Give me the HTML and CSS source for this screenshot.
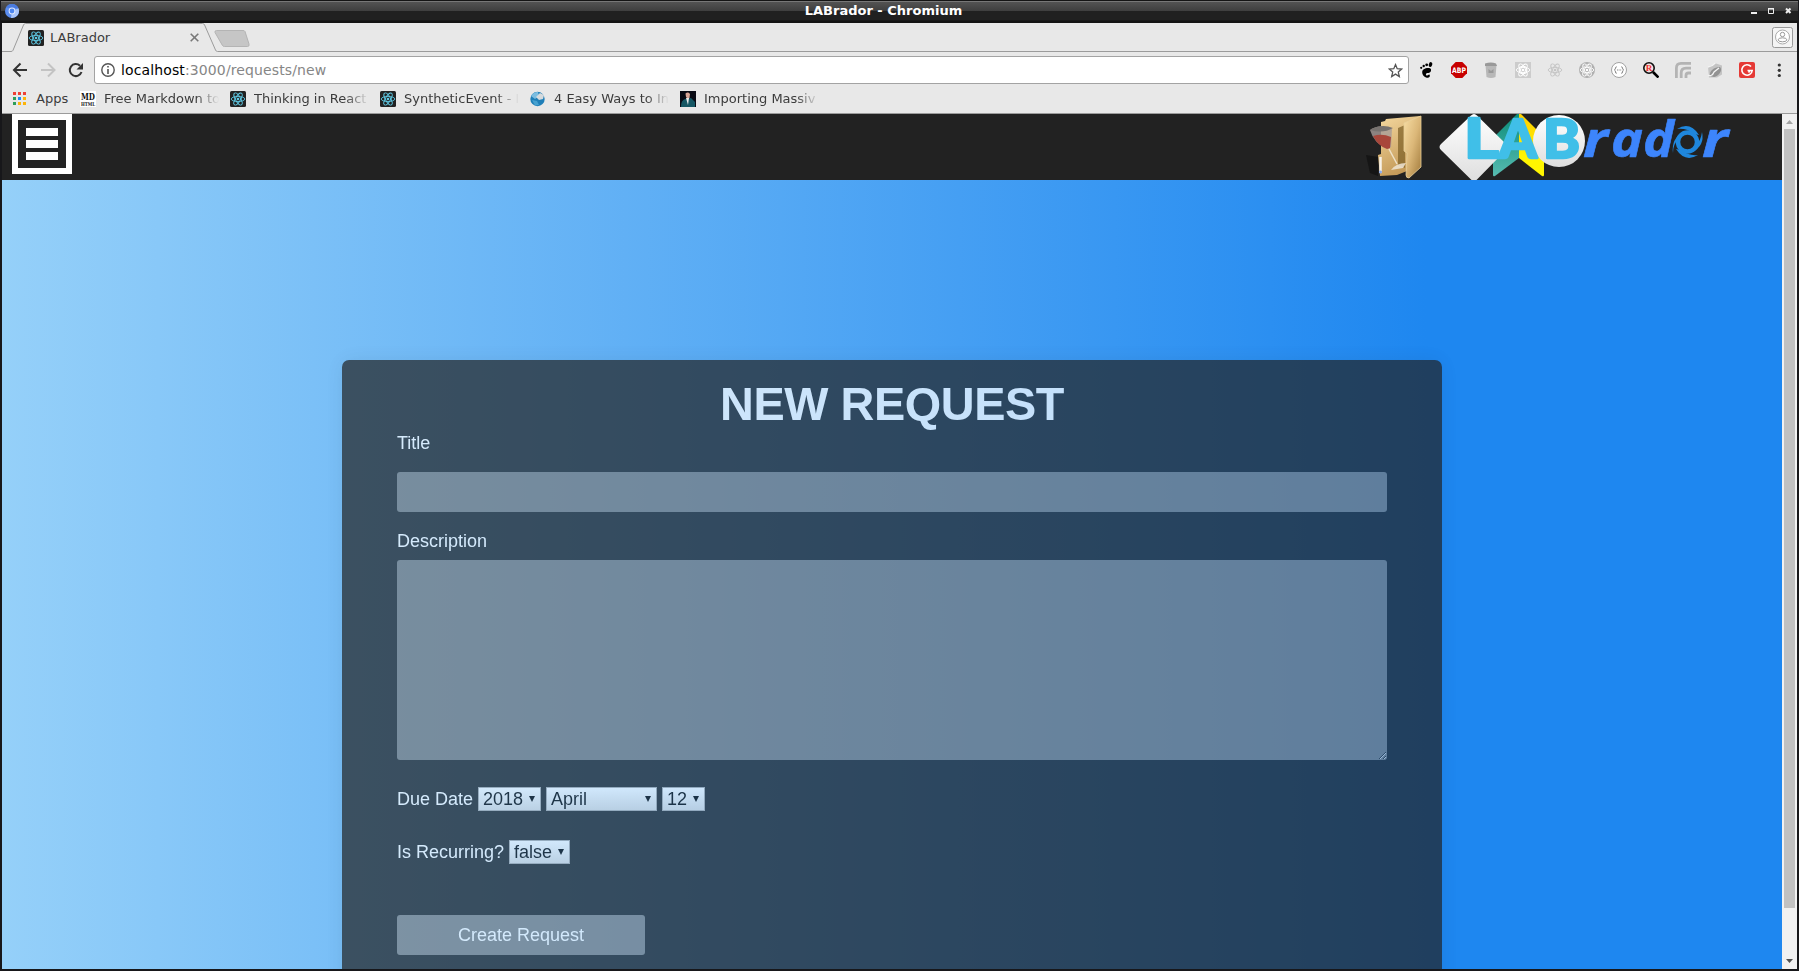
FILE: index.html
```html
<!DOCTYPE html>
<html lang="en">
<head>
<meta charset="utf-8">
<title>LABrador</title>
<link rel="stylesheet" href="styles.css">
</head>
<body>
<svg width="0" height="0" class="defs">
  <defs>
    <symbol id="atom" viewBox="0 0 16 16">
      <g fill="none" stroke="currentColor" stroke-width=".9">
        <ellipse cx="8" cy="8" rx="6.8" ry="2.6"/>
        <ellipse cx="8" cy="8" rx="6.8" ry="2.6" transform="rotate(60 8 8)"/>
        <ellipse cx="8" cy="8" rx="6.8" ry="2.6" transform="rotate(120 8 8)"/>
      </g>
      <circle cx="8" cy="8" r="1.3" fill="currentColor"/>
    </symbol>
    <symbol id="react" viewBox="0 0 16 16">
      <rect width="16" height="16" rx="1.5" fill="#222"/>
      <use href="#atom" width="16" height="16"/>
    </symbol>
  </defs>
</svg>
<div class="window">
  <div class="titlebar">
    <svg class="chromium" width="14" height="14" viewBox="0 0 14 14"><circle cx="7" cy="7" r="7" fill="#5b8def"/><path d="M7 7 13.4 4.2A7 7 0 0 1 6 13.9Z" fill="#a9c5fb"/><path d="M1 3.5A7 7 0 0 1 13.4 4.2H7Z" fill="#4a7be0"/><circle cx="7" cy="7" r="3.4" fill="#dfe9fd"/><circle cx="7" cy="7" r="2.4" fill="#4d86f0"/></svg>
    <span class="win-title">LABrador - Chromium</span>
    <svg class="win-buttons" width="42" height="8" viewBox="0 0 42 8"><path d="M0 5h6v2H0z" fill="#eee"/><path d="M17 1h6v1.6h-6z" fill="#eee"/><path d="M17.500 1.500h5v5h-5z" fill="none" stroke="#eee"/><path d="M35 1.500l4.500 4.500M39.500 1.500l-4.500 4.500" stroke="#eee" stroke-width="2"/></svg>
  </div>
  <div class="tabs">
    <svg class="tab-shape" width="1795" height="29" viewBox="0 0 1795 29">
      <path d="M0 28.500H9q1.500 0 2-1.200L21.500 2q.7-1.500 2-1.500H200.500q1.500 0 2.100 1.500L213.500 27q.6 1.500 2 1.500H1795" fill="none" stroke="#9b9b9b"/>
      <path d="M214.500 7.500h26.500q1.500 0 2 1l4 12.500q.6 2.500-1.500 2.500h-23q-1.600 0-2.200-1.300L213 9.500q-.5-2 1.500-2z" fill="#c6c6c6" stroke="#b4b4b4"/>
    </svg>
    <div class="tab">
      <svg class="react" width="16" height="16"><use href="#react"/></svg>
      <span>LABrador</span>
      <svg width="9" height="9" viewBox="0 0 9 9"><path d="M.7.7l7.600 7.600M8.300.7.7 8.300" stroke="#777" stroke-width="1.600"/></svg>
    </div>
    <svg class="profile" width="21" height="21" viewBox="0 0 21 21"><rect x=".5" y=".5" width="20" height="20" rx="2" fill="#f4f4f4" stroke="#999"/><circle cx="10.500" cy="10" r="7" fill="#fff" stroke="#aaa"/><circle cx="10.500" cy="7.500" r="2.200" fill="none" stroke="#999"/><ellipse cx="10.500" cy="12.800" rx="4.300" ry="2" fill="none" stroke="#999"/></svg>
  </div>
  <div class="toolbar">
    <svg class="nav" width="76" height="16" viewBox="0 0 76 16" fill="none" stroke-width="2">
      <path d="M15 8H2.500M8.500 1.500 2 8 8.500 14.500" stroke="#333"/>
      <path d="M29 8H41.500M36 1.500 42.500 8l-6.500 6.500" stroke="#c3c3c3"/>
      <path d="M68 3.800A6 6 0 1 0 69.500 10" stroke="#333"/><path d="M71 1v6.500h-6.500z" fill="#333"/>
    </svg>
    <div class="omnibox">
      <svg width="14" height="14" viewBox="0 0 14 14"><circle cx="7" cy="7" r="6.200" fill="none" stroke="#555" stroke-width="1.400"/><path d="M6.200 3h1.600v1.600H6.200zM6.200 6h1.600v5H6.200z" fill="#555"/></svg>
      <span class="url"><b>localhost</b>:3000/requests/new</span>
      <svg class="star" width="15" height="15" viewBox="0 0 15 15"><path d="M7.500 1.600 9.200 5.700l4.500.4-3.400 3 1 4.400-3.800-2.400-3.800 2.400 1-4.400-3.400-3 4.500-.4z" fill="none" stroke="#555" stroke-width="1.300"/></svg>
    </div>
    <div class="extensions">
      <svg width="16" height="16" viewBox="0 0 16 16"><ellipse cx="11.500" cy="2.600" rx="1.700" ry="2.500" transform="rotate(15 11.500 2.600)"/><circle cx="7.700" cy="2.800" r="1.400"/><circle cx="4.700" cy="4" r="1.200"/><circle cx="2.200" cy="5.800" r="1.100"/><path d="M11 6.200C7 5.500 3 7 3.200 10.500S7 16 9 15.800c2-.2 2.200-2 1.500-3.200l-1.600.3c-.5 1-2 .6-2-.5 0-1.400 1.600-1.600 2.600-1.500 2.500 0 3.500-3.900 1.500-4.700z"/></svg>
      <svg width="16" height="16" viewBox="0 0 16 16"><path d="M4.700 0h6.600L16 4.700v6.600L11.300 16H4.700L0 11.300V4.700z" fill="#c70000"/><text x="8" y="11" class="abp" textLength="14" lengthAdjust="spacingAndGlyphs">ABP</text></svg>
      <svg width="16" height="16" viewBox="0 0 16 16"><path d="M2.500 3h11l-1 12q-4.500 2-9 0z" fill="#b8b8b8"/><path d="M2 1.500q6-2 11 0l1 2.500H2z" fill="#999"/><path d="M5.500 7l2.500 2 2.500-2v4h-5z" fill="#999"/></svg>
      <svg class="white" width="16" height="16"><rect width="16" height="16" fill="#ccc"/><use href="#atom"/><circle cx="8" cy="8" r="4" fill="none" stroke="#fff"/></svg>
      <svg class="pale" width="16" height="16"><use href="#atom"/></svg>
      <svg class="white" width="16" height="16"><circle cx="8" cy="8" r="8" fill="#b0b0b0"/><use href="#atom"/><circle cx="8" cy="8" r="4.500" fill="none" stroke="#e5e5e5"/></svg>
      <svg width="16" height="16" viewBox="0 0 16 16"><circle cx="8" cy="8" r="7.500" fill="#fff" stroke="#a2a2a2"/><path d="M5.800 4.800q-1.300 0-1.300 1.200T3.300 8q1.200.4 1.200 2t1.300 1.200M10.200 4.800q1.300 0 1.300 1.200t1.200 2q-1.200.4-1.200 2t-1.300 1.200" fill="none" stroke="#888"/><path d="M6 7.600h1v1H6zm1.600 0h1v1h-1zm1.600 0h1v1h-1z" fill="#888"/></svg>
      <svg width="16" height="16" viewBox="0 0 16 16"><circle cx="6" cy="6" r="5.200" fill="#f3e3e3" stroke="#111" stroke-width="1.600"/><path d="M10 10l5.500 5.500" stroke="#000" stroke-width="2.600"/><text x="6" y="9.200" class="mag">R</text></svg>
      <svg width="16" height="16" viewBox="0 0 16 16" fill="none" stroke="#b4b4b4" stroke-width="2.800"><path d="M1.400 16V6Q1.400 1.400 6 1.400H16M6.200 16V11q0-4.800 4.800-4.800H16M11 16v-2.500Q11 11 13.500 11H16"/></svg>
      <svg width="16" height="16" viewBox="0 0 16 16"><path d="M1 5l8-3.500 6 2v9l-5 3H2z" fill="#c4c4c4"/><path d="M3 14c-1-5 4-9 10-9 3 3-1 9-6 10z" fill="#929292"/><path d="M1 5q5-1 7-4M1 13q4 2 6-3l5-4" stroke="#f4f4f4" stroke-width="1.300" fill="none"/></svg>
      <svg width="16" height="16" viewBox="0 0 16 16"><rect width="16" height="16" rx="2" fill="#e53935"/><path d="M12 4.600A5.200 5.200 0 1 0 13.200 8.500H8.500M11 8.800l-1.500 1.700" fill="none" stroke="#fff" stroke-width="1.600"/></svg>
      <svg width="16" height="16" viewBox="0 0 16 16" fill="#333"><circle cx="8.300" cy="3" r="1.600"/><circle cx="8.300" cy="8.300" r="1.600"/><circle cx="8.300" cy="13.500" r="1.600"/></svg>
    </div>
  </div>
  <div class="bookmarks">
    <div class="apps">
      <svg width="13" height="13" viewBox="0 0 13 13"><path d="M0 0h3v3H0zM5 0h3v3H5zM10 0h3v3h-3z" fill="#ee4035"/><path d="M0 5h3v3H0zM0 10h3v3H0z" fill="#2d9e58"/><path d="M5 5h3v3H5z" fill="#1d8cf0"/><path d="M10 5h3v3h-3zM5 10h3v3H5zM10 10h3v3h-3z" fill="#fcb40a"/></svg>
      <span>Apps</span>
    </div>
    <div class="mark"><svg width="16" height="16" viewBox="0 0 16 16"><rect width="16" height="16" fill="#fff"/><text x="8" y="8.500" class="md" textLength="14" lengthAdjust="spacingAndGlyphs">MD</text><text x="8" y="14.500" class="mdsub" textLength="14" lengthAdjust="spacingAndGlyphs">HTML</text></svg><span>Free Markdown to</span></div>
    <div class="mark"><svg class="react" width="16" height="16"><use href="#react"/></svg><span>Thinking in React</span></div>
    <div class="mark"><svg class="react" width="16" height="16"><use href="#react"/></svg><span>SyntheticEvent - I</span></div>
    <div class="mark"><svg width="16" height="16" viewBox="0 0 16 16"><circle cx="7.500" cy="8" r="7.200" fill="#1f7fb8"/><path d="M1 5q3-4.500 7-4l1 4-4 3z" fill="#7cbde0"/><path d="M6 6l4-4 4 2-1 4-4 1z" fill="#d5dadd"/><path d="M2 9l5 1 2 4-4 .500z" fill="#46a1d0"/></svg><span>4 Easy Ways to In</span></div>
    <div class="mark"><svg width="16" height="16" viewBox="0 0 16 16"><path d="M0 0h16v16H0z" fill="#090a14"/><path d="M1 16q0-7 4-8l6-1 4 4v5z" fill="#155764"/><path d="M5.500 2.500q2.500-2 4.500.5L9.500 7 8 8 6 6z" fill="#d8a596"/><path d="M6 7l3 0-1 7z" fill="#eee"/></svg><span>Importing Massiv</span></div>
  </div>
  <div class="viewport">
    <div class="page">
      <header class="site-header">
        <div class="burger"><i></i><i></i><i></i></div>
        <div class="brand">
          <svg width="58" height="66" viewBox="0 0 58 66">
            <defs><linearGradient id="fold" x1="0" y1="0" x2=".4" y2="1"><stop offset="0" stop-color="#f5d9a0"/><stop offset="1" stop-color="#c49a58"/></linearGradient>
            <linearGradient id="flap" x1="0" y1="0" x2="1" y2="1"><stop offset="0" stop-color="#f7dda4"/><stop offset=".5" stop-color="#dbb778"/><stop offset="1" stop-color="#a17a3b"/></linearGradient></defs>
            <path d="M1 41l12 2v19L5 59z" fill="#151515"/>
            <path d="M16 8l4-1 1-2 34-3v8L42 57l-10 4-17 1-2-21 3-1z" fill="url(#fold)"/>
            <path d="M33 14l7-3v43l-7-3z" fill="#806329" opacity=".75"/>
            <path d="M39 9 56 2v51L44 64q-3 0-3-3l1-22-3-2z" fill="url(#flap)" stroke="#ead09a" stroke-width=".8"/>
            <path d="M5 16Q15 9 27 15l-1 18-3 2Q9 30 5 16z" fill="#a79c98" opacity=".8"/>
            <path d="M8 22q9-3 18 1l-1 11-3 1Q13 32 8 22z" fill="#a8473b"/>
            <path d="M5 16Q16 9 28 14 18 20 5 16z" fill="#77726f"/>
            <path d="M24 35l8 15" stroke="#eee1c7" stroke-width="1.500"/>
            <path d="M26 56q5-7 15-7l-3 5z" fill="#eee5d5" opacity=".85"/>
            <path d="M15.500 43v16" stroke="#f7f2e8" stroke-width="2.500"/><circle cx="15.500" cy="58" r="1.500" fill="#88aaf0"/>
          </svg>
          <svg class="logo" width="294" height="66" viewBox="1438 114 294 66">
            <defs><linearGradient id="silver" x1="0" y1="0" x2="0" y2="1"><stop offset="0" stop-color="#fff"/><stop offset="1" stop-color="#dedede"/></linearGradient>
            <linearGradient id="teal" x1="0" y1="0" x2="0" y2="1"><stop offset="0" stop-color="#098b78"/><stop offset="1" stop-color="#57bbb0"/></linearGradient>
            <linearGradient id="yel" x1="0" y1="0" x2="0" y2="1"><stop offset="0" stop-color="#ffcd00"/><stop offset=".7" stop-color="#fff500"/></linearGradient></defs>
            <path d="M1519 112V158l-24 18q-2 1-2-1V138z" fill="url(#teal)"/>
            <path d="M1519 112l25 25v38q0 2-2 1l-23-18z" fill="url(#yel)"/>
            <path d="M1471 115.500q3-3 6 0L1506 144q3 3 0 6l-29 29.500q-3 3-6 0L1441 150q-3-3 0-6z" fill="url(#silver)"/>
            <circle cx="1559" cy="141" r="26" fill="url(#silver)"/>
            <g class="lab"><text x="1464" y="158" textLength="35" lengthAdjust="spacingAndGlyphs" font-size="56">L</text><text x="1499" y="158" textLength="38" lengthAdjust="spacingAndGlyphs" font-size="53">A</text><text x="1543" y="158" textLength="37" lengthAdjust="spacingAndGlyphs" font-size="53">B</text></g>
            <g class="rador"><text x="1583" y="156.500" textLength="25" lengthAdjust="spacingAndGlyphs">r</text><text x="1611" y="156.500" textLength="32" lengthAdjust="spacingAndGlyphs">a</text><text x="1643" y="156.500" textLength="31" lengthAdjust="spacingAndGlyphs">d</text><text x="1702" y="156.500" textLength="26" lengthAdjust="spacingAndGlyphs">r</text></g>
            <g fill="#1f87dd"><circle cx="1687.500" cy="142" r="9.500" fill="none" stroke="#1f87dd" stroke-width="4.500"/><path d="M1677 129q13-8 22 6l-5-1q-7-6-17-5z"/><path d="M1698 155q-13 8-22-6l5 1q7 6 17 5z"/><path d="M1702 132q3 14-10 20l3-6q6-5 7-14z"/><path d="M1673 153q-2-14 10-21l-4 6q-6 6-6 15z"/></g>
          </svg>
        </div>
      </header>
      <main class="content">
        <form class="card">
          <h1>NEW REQUEST</h1>
          <label>Title</label>
          <input class="field title-field" type="text">
          <label class="desc-label">Description</label>
          <textarea class="field area"></textarea>
          <div class="row due"><span>Due Date</span><span class="select year">2018<i></i></span><span class="select month">April<i></i></span><span class="select day">12<i></i></span></div>
          <div class="row recur"><span>Is Recurring?</span><span class="select bool">false<i></i></span></div>
          <button class="submit" type="button">Create Request</button>
        </form>
      </main>
    </div>
    <div class="scrollbar">
      <svg width="7" height="4" viewBox="0 0 7 4"><path d="M0 4h7L3.500 0z" fill="#a3a3a3"/></svg>
      <div class="thumb"></div>
      <svg width="7" height="4" viewBox="0 0 7 4"><path d="M0 0h7L3.500 4z" fill="#505050"/></svg>
    </div>
  </div>
</div>
</body>
</html>
```
FILE: styles.css
```css
* { box-sizing: border-box; }
body { margin: 0; background: #17171a; overflow: hidden; }
.defs { position: absolute; }
svg { display: block; flex: none; }

.window {
  width: 1799px; height: 971px; padding: 0 2px 2px;
  display: flex; flex-direction: column;
  font: 13px "DejaVu Sans", sans-serif; color: #3c3c3c;
}
.titlebar {
  height: 23px; flex: none; margin: 0 -1px; padding: 0 5px 2px 4px;
  display: flex; align-items: center; justify-content: space-between;
  background: linear-gradient(#141414 0 1px, #777 1px 2px, #535353 2px, #3e3e3e 11px, #202020 11px, #202020 20px, #141414 21px);
}
.win-title { font-weight: bold; color: #fff; margin-right: 3px; }

.tabs {
  position: relative; height: 29px; flex: none; background: #e8e8e8;
  display: flex; justify-content: space-between; padding: 4px 4px 0 26px;
}
.tab-shape { position: absolute; left: 0; top: 0; }
.tab { position: relative; display: flex; align-items: center; width: 171px; height: 21px; gap: 6px; }
.tab span { flex: 1; }
.react { color: #5fc9e4; }
.profile { position: relative; }

.toolbar { height: 35px; flex: none; background: #e8e8e8; display: flex; padding: 4px 10px 0 10px; }
.nav { margin: 6px 6px 0 0; }
.omnibox {
  width: 1315px; height: 28px; border: 1px solid #a3a3a3; border-radius: 3px; background: #fff;
  display: flex; align-items: center; padding: 0 5px 0 6px; flex: none;
}
.url { flex: 1; margin-left: 6px; font-size: 14px; letter-spacing: .12px; color: #868686; }
.url b { font-weight: normal; color: #000; }
.extensions { display: flex; gap: 16px; margin: 6px 0 0 10px; height: 16px; }
.white { color: #fff; }
.pale { color: #c4c4c4; }
.abp { font: bold 7.5px "DejaVu Sans", sans-serif; fill: #fff; text-anchor: middle; }
.mag { font: bold 9px "Liberation Serif", serif; fill: #e33; text-anchor: middle; }
.md { font: bold 9.5px "DejaVu Serif", serif; fill: #111; text-anchor: middle; }
.mdsub { font: bold 5px "DejaVu Serif", serif; fill: #111; text-anchor: middle; }

.bookmarks {
  height: 27px; flex: none; background: #e8e8e8; border-bottom: 1px solid #9b9b9b;
  display: flex; padding: 0 0 3px 11px; align-items: center;
}
.apps { display: flex; align-items: center; gap: 10px; width: 67px; }
.mark { display: flex; align-items: center; gap: 8px; width: 150px; }
.mark span {
  width: 126px; white-space: nowrap;
  -webkit-mask-image: linear-gradient(90deg, #000 92px, transparent 115px);
  mask-image: linear-gradient(90deg, #000 92px, transparent 115px);
}

.viewport { height: 855px; flex: none; display: flex; overflow: hidden; }
.page {
  width: 1780px; height: 855px; overflow: hidden;
  font: 18px "Liberation Sans", Arial, sans-serif;
  background: linear-gradient(90deg, #95d0f9, #1e87f0 80%);
}
.site-header { height: 66px; background: #222; display: flex; justify-content: space-between; padding: 0 50px 0 10px; }
.burger {
  width: 60px; height: 60px; border: 6px solid #fff; padding: 8px;
  display: flex; flex-direction: column; gap: 4px;
}
.burger i { height: 8px; background: #fff; }
.brand { display: flex; gap: 15px; }
.lab { font-family: Lato, sans-serif; font-weight: 900; fill: #40bfe8; stroke: #40bfe8; stroke-width: 2.4; stroke-linejoin: round; }
.rador { font: italic bold 51px "Open Sans", "Noto Sans", sans-serif; fill: #3d85fc; stroke: #3d85fc; stroke-width: .6; stroke-linejoin: round; }

.content { display: flex; justify-content: center; padding-top: 180px; }
.card {
  width: 1100px; height: 720px; padding: 16px 55px; border-radius: 7px;
  background: #222; opacity: .7; color: #fff;
  box-shadow: 0 0 20px rgba(0, 0, 0, .1);
  display: flex; flex-direction: column; align-items: flex-start;
}
h1 { margin: 0; align-self: center; font-size: 46.8px; line-height: 56px; letter-spacing: -.4px; }
label { line-height: 22px; }
.field { width: 990px; border: 0; border-radius: 3px; background: rgba(255, 255, 255, .4); padding: 0 10px; outline: 0; }
.title-field { height: 40px; margin-top: 18px; }
.desc-label { margin-top: 18px; }
.area { height: 200px; margin-top: 8px; display: block; }
.row { display: flex; align-items: center; gap: 5px; height: 24px; }
.due { margin-top: 27px; }
.recur { margin-top: 29px; }
.select {
  display: flex; align-items: center; justify-content: space-between;
  height: 24px; padding: 0 5px 0 4px; border: 1px solid #a9a9a9;
  background: linear-gradient(#fff, #ddd); color: #000;
}
.select i { border: 3px solid transparent; border-top: 6px solid #000; border-bottom: 0; }
.year { width: 63px; }
.month { width: 111px; }
.day { width: 43px; }
.bool { width: 61px; }
.submit {
  margin-top: 51px; width: 248px; height: 40px; border: 0; border-radius: 3px;
  background: rgba(255, 255, 255, .43); color: #fff; font: inherit;
}

.scrollbar {
  width: 15px; background: #f1f1f1; display: flex; flex-direction: column; align-items: center; padding: 6px 0;
}
.thumb { width: 11px; height: 779px; margin: 5px 0 51px; background: #c1c1c1; }
```
